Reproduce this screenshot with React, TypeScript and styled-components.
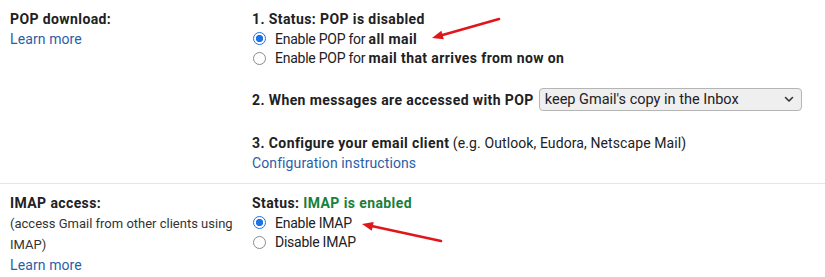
import React from 'react';
import styled, { createGlobalStyle } from 'styled-components';

const Global = createGlobalStyle`
    html, body {
        margin: 0;
        padding: 0;
        background: #fff;
    }
    body {
        font-family: Roboto, "Liberation Sans", Arial, sans-serif;
        font-size: 14px;
        color: #202124;
    }
`

const Page = styled.div`
    position: relative;
    width: 825px;
    height: 277px;
    overflow: hidden;
`

const Section = styled.div<{ $divider?: boolean }>`
    display: grid;
    grid-template-columns: 242px 1fr;
    padding: 9px 0 10px 10px;
    border-bottom: ${p => (p.$divider ? '1px solid #e6e6e6' : 'none')};
`

const LabelCol = styled.div`
    display: flex;
    flex-direction: column;
    line-height: 20px;
`

const Title = styled.div`
    font-weight: 700;
    letter-spacing: 0.4px;
`

const Note = styled.div`
    font-size: 13px;
    line-height: 21px;
    width: 232px;
    color: #333;
`

const LinkText = styled.a`
    color: #2b5ea7;
    text-decoration: none;
    letter-spacing: 0.1px;
    cursor: pointer;
`

const Body = styled.div`
    display: flex;
    flex-direction: column;
    line-height: 20px;
`

const Step = styled.div<{ $gap?: number }>`
    margin-top: ${p => p.$gap ?? 0}px;
    display: flex;
    align-items: center;
    white-space: pre;
`

const Strong = styled.span`
    font-weight: 700;
    letter-spacing: 0.4px;
`

const Green = styled.span`
    font-weight: 700;
    letter-spacing: 0.4px;
    color: #188038;
`

const Light = styled.span`
    font-weight: 400;
    letter-spacing: 0.1px;
`

const RadioRow = styled.label`
    display: flex;
    align-items: center;
    gap: 9px;
    height: 19.5px;
    white-space: pre;
`

const RadioText = styled.span`
    letter-spacing: -0.25px;
`

const Radio = styled.input`
    appearance: none;
    margin: 0 0 0 1px;
    width: 13px;
    height: 13px;
    border-radius: 50%;
    border: 1px solid #8a8a8a;
    background: #fff;
    &:checked {
        border-color: #1a73e8;
        background: radial-gradient(circle, #1a73e8 0 3.4px, #fff 3.9px);
    }
`

const SelectWrap = styled.div`
    position: relative;
    margin-left: 5px;
    width: 263px;
    height: 23px;
`

const Select = styled.select`
    appearance: none;
    width: 100%;
    height: 100%;
    border: 1px solid #b5b5b5;
    border-radius: 4px;
    background: #efeff0;
    font-family: Roboto, "Liberation Sans", Arial, sans-serif;
    font-size: 14.5px;
    color: #202124;
    padding: 0 0 0 5px;
`

const Chevron = styled.svg`
    position: absolute;
    right: 8px;
    top: 8px;
    pointer-events: none;
`

const Overlay = styled.svg`
    position: absolute;
    inset: 0;
    pointer-events: none;
`

const Arrow = ({ x1, y1, x2, y2 }: { x1: number; y1: number; x2: number; y2: number }) => {
    const a = Math.atan2(y2 - y1, x2 - x1);
    const len = 11;
    const w = 4.5;
    const bx = x2 - len * Math.cos(a);
    const by = y2 - len * Math.sin(a);
    const px = -Math.sin(a) * w;
    const py = Math.cos(a) * w;
    return (
        <g>
            <line x1={x1} y1={y1} x2={bx} y2={by} stroke="#e0161b" strokeWidth={2.6} strokeLinecap="round" />
            <polygon points={`${x2},${y2} ${bx + px},${by + py} ${bx - px},${by - py}`} fill="#e0161b" />
        </g>
    );
};

const App = () => {
    return (
    <>
    <Global/>
    <Page>
        <Section $divider>
            <LabelCol>
                <Title>POP download:</Title>
                <LinkText>Learn more</LinkText>
            </LabelCol>
            <Body>
                <Step><Strong>1. Status: POP is disabled</Strong></Step>
                <RadioRow>
                    <Radio type="radio" name="pop" defaultChecked/>
                    <RadioText>Enable POP for <Strong>all mail</Strong></RadioText>
                </RadioRow>
                <RadioRow>
                    <Radio type="radio" name="pop"/>
                    <RadioText>Enable POP for <Strong>mail that arrives from now on</Strong></RadioText>
                </RadioRow>
                <Step $gap={20}>
                    <Strong>2. When messages are accessed with POP</Strong>
                    <SelectWrap>
                        <Select defaultValue="keep">
                            <option value="keep">keep Gmail's copy in the Inbox</option>
                            <option value="read">mark Gmail's copy as read</option>
                            <option value="archive">archive Gmail's copy</option>
                            <option value="delete">delete Gmail's copy</option>
                        </Select>
                        <Chevron width="10" height="7" viewBox="0 0 10 7">
                            <path d="M1.5 1.5 L5 5 L8.5 1.5" fill="none" stroke="#333" strokeWidth="1.6" strokeLinecap="round" strokeLinejoin="round"/>
                        </Chevron>
                    </SelectWrap>
                </Step>
                <Step $gap={22}>
                    <Strong>3. Configure your email client</Strong><Light> (e.g. Outlook, Eudora, Netscape Mail)</Light>
                </Step>
                <Step><LinkText>Configuration instructions</LinkText></Step>
            </Body>
        </Section>
        <Section>
            <LabelCol>
                <Title>IMAP access:</Title>
                <Note>(access Gmail from other clients using IMAP)</Note>
                <LinkText>Learn more</LinkText>
            </LabelCol>
            <Body>
                <Step><Strong>Status: </Strong><Green>IMAP is enabled</Green></Step>
                <RadioRow>
                    <Radio type="radio" name="imap" defaultChecked/>
                    <RadioText>Enable IMAP</RadioText>
                </RadioRow>
                <RadioRow>
                    <Radio type="radio" name="imap"/>
                    <RadioText>Disable IMAP</RadioText>
                </RadioRow>
            </Body>
        </Section>
        <Overlay width="825" height="277">
            <Arrow x1={499} y1={19} x2={432} y2={38}/>
            <Arrow x1={441} y1={241} x2={362} y2={224}/>
        </Overlay>
    </Page>
    </>
    );
};

export default App;
